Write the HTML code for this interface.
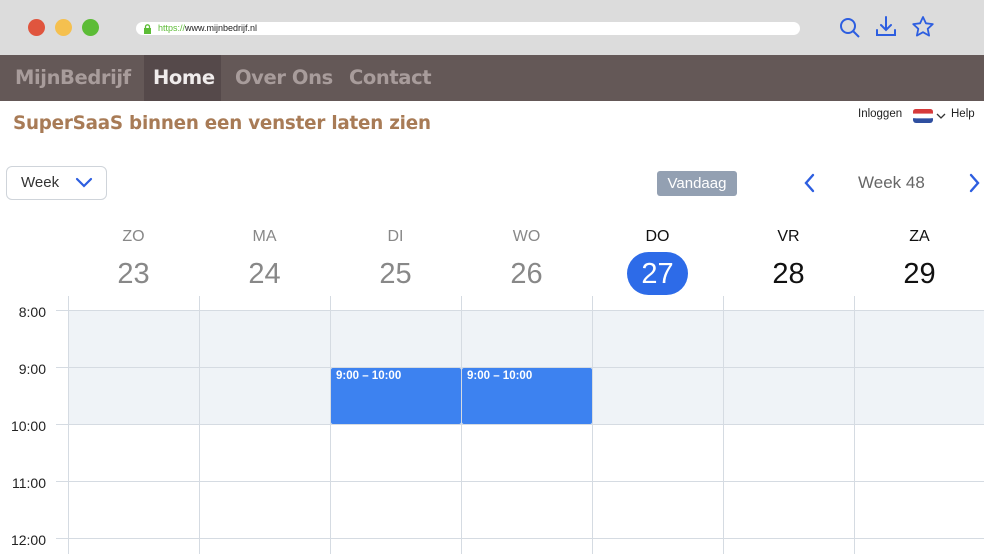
<!DOCTYPE html>
<html><head><meta charset="utf-8"><style>
*{margin:0;padding:0;box-sizing:border-box}
body{width:984px;height:554px;overflow:hidden;background:#fff;font-family:"Liberation Sans",sans-serif;position:relative}
.a{position:absolute}
.top{left:0;top:0;width:984px;height:55px;background:#dcdcdc}
.dot{width:17px;height:17px;border-radius:50%;top:19px}
.url{left:136px;top:22px;width:664px;height:13px;background:#fff;border-radius:7px;font-size:9px;line-height:13px;padding-left:22px;color:#222}
.nav{left:0;top:55px;width:984px;height:46px;background:#645857}
.nav span{position:absolute;top:0;height:46px;line-height:46px;font-size:19.5px;font-weight:bold;color:#a89c9b;font-family:"DejaVu Sans",sans-serif;letter-spacing:-0.4px}
.col{top:296px;width:1px;height:258px;background:#d5dbe2}
.hl{left:56px;width:928px;height:1px;background:#d5dbe2}
.tm{left:0;width:46px;text-align:right;font-size:14px;color:#222}
.dn{width:131px;text-align:center;font-size:16px;color:#888;top:228px}
.dd{width:131px;text-align:center;font-size:29px;color:#888;top:258px}
.ev{background:#3d82f0;color:#fff;font-size:11.5px;font-weight:bold;padding:2px 5px;border-radius:2px;top:368px;height:56px;width:130px}
</style></head><body>
<div class="a top"></div>
<div class="a dot" style="left:28px;background:#e0553e"></div>
<div class="a dot" style="left:55px;background:#f5c04f"></div>
<div class="a dot" style="left:82px;background:#5cbc36"></div>
<div class="a url"><span style="color:#5cbc36">https://</span>www.mijnbedrijf.nl</div>
<svg class="a" style="left:143px;top:24px" width="9" height="10"><rect x="1" y="4" width="7" height="6" fill="#5cbc36"/><path d="M2.5 4V2.8a2 2 0 0 1 4 0V4" stroke="#5cbc36" fill="none" stroke-width="1.3"/></svg>
<svg class="a" style="left:838px;top:16px" width="24" height="24" fill="none" stroke="#2d5ee0" stroke-width="2"><circle cx="10" cy="10" r="7"/><path d="M15 15l6 6"/></svg>
<svg class="a" style="left:875px;top:15px" width="22" height="24" fill="none" stroke="#2d5ee0" stroke-width="2" stroke-linecap="round"><path d="M11 2v13M6 10l5 5 5-5M2 15v5h18v-5"/></svg>
<svg class="a" style="left:911px;top:15px" width="24" height="24" fill="none" stroke="#2d5ee0" stroke-width="1.8" stroke-linejoin="round"><path d="M12 2l2.9 6.3 6.9.8-5.1 4.7 1.4 6.8L12 17.2 5.9 20.6l1.4-6.8L2.2 9.1l6.9-.8z"/></svg>
<div class="a nav"><div class="a" style="left:144px;top:0;width:77px;height:46px;background:#55494a"></div>
<span style="left:15px">MijnBedrijf</span><span style="left:153px;color:#f0ecec">Home</span><span style="left:235px">Over Ons</span><span style="left:349px">Contact</span></div>
<div class="a" style="left:13px;top:113px;font-size:18.3px;font-weight:bold;color:#a87b56;font-family:'DejaVu Sans',sans-serif;letter-spacing:-0.2px">SuperSaaS binnen een venster laten zien</div>
<div class="a" style="left:858px;top:108px;font-size:11.5px;color:#222">Inloggen</div>
<svg class="a" style="left:913px;top:109px" width="20" height="14"><rect width="20" height="14" rx="3" fill="#2f4fa0"/><rect width="20" height="9.3" rx="3" fill="#fff"/><rect width="20" height="4.7" rx="3" fill="#d63a3a"/><rect y="3" width="20" height="2" fill="#d63a3a"/><rect y="4.6" width="20" height="4.6" fill="#fff"/></svg>
<svg class="a" style="left:936px;top:112px" width="10" height="8" fill="none" stroke="#333" stroke-width="1.3"><path d="M1 2l4 4 4-4"/></svg>
<div class="a" style="left:951px;top:108px;font-size:11.5px;color:#222">Help</div>
<div class="a" style="left:6px;top:166px;width:101px;height:34px;border:1px solid #cfd4da;border-radius:6px"></div>
<div class="a" style="left:21px;top:174px;font-size:15px;color:#333">Week</div>
<svg class="a" style="left:75px;top:177px" width="18" height="12" fill="none" stroke="#2d5ee0" stroke-width="2.2" stroke-linecap="round"><path d="M2 2l7 7 7-7"/></svg>
<div class="a" style="left:657px;top:171px;width:80px;height:25px;background:#93a0b2;border-radius:3px;color:#fff;font-size:15px;text-align:center;line-height:25px">Vandaag</div>
<svg class="a" style="left:803px;top:173px" width="14" height="20" fill="none" stroke="#2d5ee0" stroke-width="2.4" stroke-linecap="round"><path d="M10 2l-7 8 7 8"/></svg>
<div class="a" style="left:858px;top:173px;font-size:17px;color:#666">Week 48</div>
<svg class="a" style="left:967px;top:173px" width="14" height="20" fill="none" stroke="#2d5ee0" stroke-width="2.4" stroke-linecap="round"><path d="M4 2l7 8-7 8"/></svg>
<div class="a dn" style="left:68px">ZO</div><div class="a dd" style="left:68px">23</div>
<div class="a dn" style="left:199px">MA</div><div class="a dd" style="left:199px">24</div>
<div class="a dn" style="left:330px">DI</div><div class="a dd" style="left:330px">25</div>
<div class="a dn" style="left:461px">WO</div><div class="a dd" style="left:461px">26</div>
<div class="a dn" style="left:592px;color:#111">DO</div>
<div class="a" style="left:627px;top:252px;width:61px;height:43px;border-radius:22px;background:#2d6be8"></div>
<div class="a dd" style="left:592px;color:#fff">27</div>
<div class="a dn" style="left:723px;color:#111">VR</div><div class="a dd" style="left:723px;color:#111">28</div>
<div class="a dn" style="left:854px;color:#111">ZA</div><div class="a dd" style="left:854px;color:#111">29</div>
<div class="a" style="left:68px;top:310px;width:916px;height:114px;background:#eff3f7"></div>
<div class="a hl" style="top:310px"></div><div class="a hl" style="top:367px"></div><div class="a hl" style="top:424px"></div><div class="a hl" style="top:481px"></div><div class="a hl" style="top:538px"></div>
<div class="a col" style="left:68px"></div><div class="a col" style="left:199px"></div><div class="a col" style="left:330px"></div><div class="a col" style="left:461px"></div><div class="a col" style="left:592px"></div><div class="a col" style="left:723px"></div><div class="a col" style="left:854px"></div>
<div class="a tm" style="top:304px">8:00</div><div class="a tm" style="top:361px">9:00</div><div class="a tm" style="top:418px">10:00</div><div class="a tm" style="top:475px">11:00</div><div class="a tm" style="top:532px">12:00</div>
<div class="a ev" style="left:331px">9:00 – 10:00</div>
<div class="a ev" style="left:462px">9:00 – 10:00</div>
</body></html>
